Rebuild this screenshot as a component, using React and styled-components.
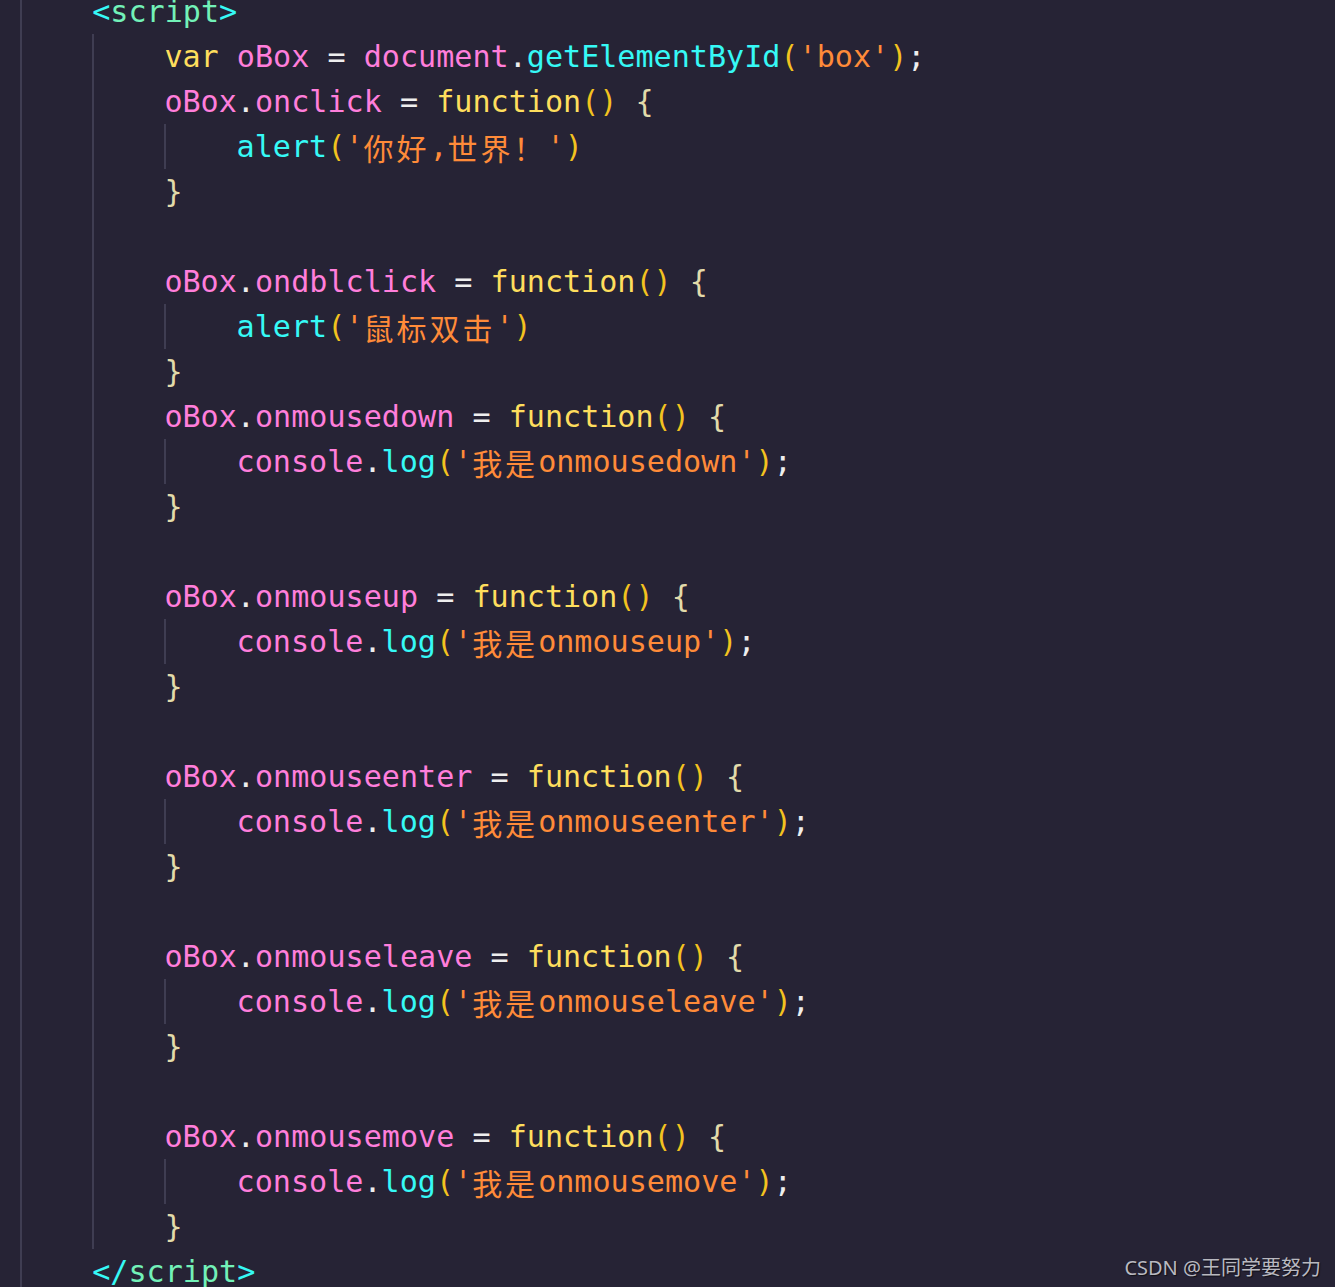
import styled, { createGlobalStyle } from 'styled-components';

const GlobalStyle = createGlobalStyle`
  html, body {
    margin: 0;
    padding: 0;
    background: #262335;
  }
`;

const colors = {
  kw: '#fede5d',
  var: '#ff7edb',
  fn: '#36f9f6',
  str: '#ff8b39',
  paren: '#f3c21f',
  brace: '#e2dbaa',
  op: '#eeeeee',
  tag: '#36f9f6',
  name: '#72f1b8',
};

const Page = styled.div`
  position: relative;
  height: 100vh;
  overflow: hidden;
  background: #262335;
`;

const Code = styled.div`
  margin-top: -11px;
  padding-left: 20px;
  font-family: 'DejaVu Sans Mono', 'Noto Sans CJK SC', monospace;
  font-size: 30.1px;
  white-space: pre;
`;

const Line = styled.div`
  display: flex;
  align-items: center;
  height: 45px;
`;

const Indent = styled.span`
  flex: none;
  align-self: stretch;
  width: 72.2px;
  box-sizing: border-box;
  border-left: 2px solid ${p => (p.$guide ? '#3f3d52' : 'transparent')};
`;

const Token = styled.span`
  color: ${p => colors[p.$kind] || '#eeeeee'};
`;

const Han = styled.span`
  font-family: 'Noto Sans CJK SC', sans-serif;
  font-size: 30px;
  letter-spacing: 3px;
  color: ${colors.str};
`;

const Watermark = styled.div`
  position: absolute;
  right: 14px;
  bottom: 6px;
  font-family: 'Noto Sans', 'Noto Sans CJK SC', sans-serif;
  font-size: 20px;
  color: #b9b9c0;
  text-shadow: 1px 1px 1px rgba(0, 0, 0, 0.6);
`;

// [indent, guides, tokens]
const handler = (name, msg) => [
  [2, 2, [['var', 'oBox'], ['op', '.'], ['var', name], ['op', ' = '], ['kw', 'function'], ['paren', '()'], ['op', ' '], ['brace', '{']]],
  [3, 3, [['var', 'console'], ['op', '.'], ['fn', 'log'], ['paren', '('], ['str', "'"], ['han', '我是'], ['str', msg + "'"], ['paren', ')'], ['op', ';']]],
  [2, 2, [['brace', '}']]],
];

const blank = [2, 2, []];

const lines = [
  [1, 1, [['tag', '<'], ['name', 'script'], ['tag', '>']]],
  [2, 2, [['kw', 'var'], ['op', ' '], ['var', 'oBox'], ['op', ' = '], ['var', 'document'], ['op', '.'], ['fn', 'getElementById'], ['paren', '('], ['str', "'box'"], ['paren', ')'], ['op', ';']]],
  [2, 2, [['var', 'oBox'], ['op', '.'], ['var', 'onclick'], ['op', ' = '], ['kw', 'function'], ['paren', '()'], ['op', ' '], ['brace', '{']]],
  [3, 3, [['fn', 'alert'], ['paren', '('], ['str', "'"], ['han', '你好'], ['str', ','], ['han', '世界！'], ['str', "'"], ['paren', ')']]],
  [2, 2, [['brace', '}']]],
  blank,
  [2, 2, [['var', 'oBox'], ['op', '.'], ['var', 'ondblclick'], ['op', ' = '], ['kw', 'function'], ['paren', '()'], ['op', ' '], ['brace', '{']]],
  [3, 3, [['fn', 'alert'], ['paren', '('], ['str', "'"], ['han', '鼠标双击'], ['str', "'"], ['paren', ')']]],
  [2, 2, [['brace', '}']]],
  ...handler('onmousedown', 'onmousedown'),
  blank,
  ...handler('onmouseup', 'onmouseup'),
  blank,
  ...handler('onmouseenter', 'onmouseenter'),
  blank,
  ...handler('onmouseleave', 'onmouseleave'),
  blank,
  ...handler('onmousemove', 'onmousemove'),
  [1, 1, [['tag', '</'], ['name', 'script'], ['tag', '>']]],
];

function CodeLine({ indent, guides, tokens }) {
  return (
    <Line>
      {Array.from({ length: indent }, (_, i) => (
        <Indent key={i} $guide={i < guides} />
      ))}
      {tokens.map(([kind, text], i) =>
        kind === 'han' ? (
          <Han key={i}>{text}</Han>
        ) : (
          <Token key={i} $kind={kind}>{text}</Token>
        )
      )}
    </Line>
  );
}

export default function App() {
  return (
    <Page>
      <GlobalStyle />
      <Code>
        {lines.map(([indent, guides, tokens], i) => (
          <CodeLine key={i} indent={indent} guides={guides} tokens={tokens} />
        ))}
      </Code>
      <Watermark>CSDN @王同学要努力</Watermark>
    </Page>
  );
}
